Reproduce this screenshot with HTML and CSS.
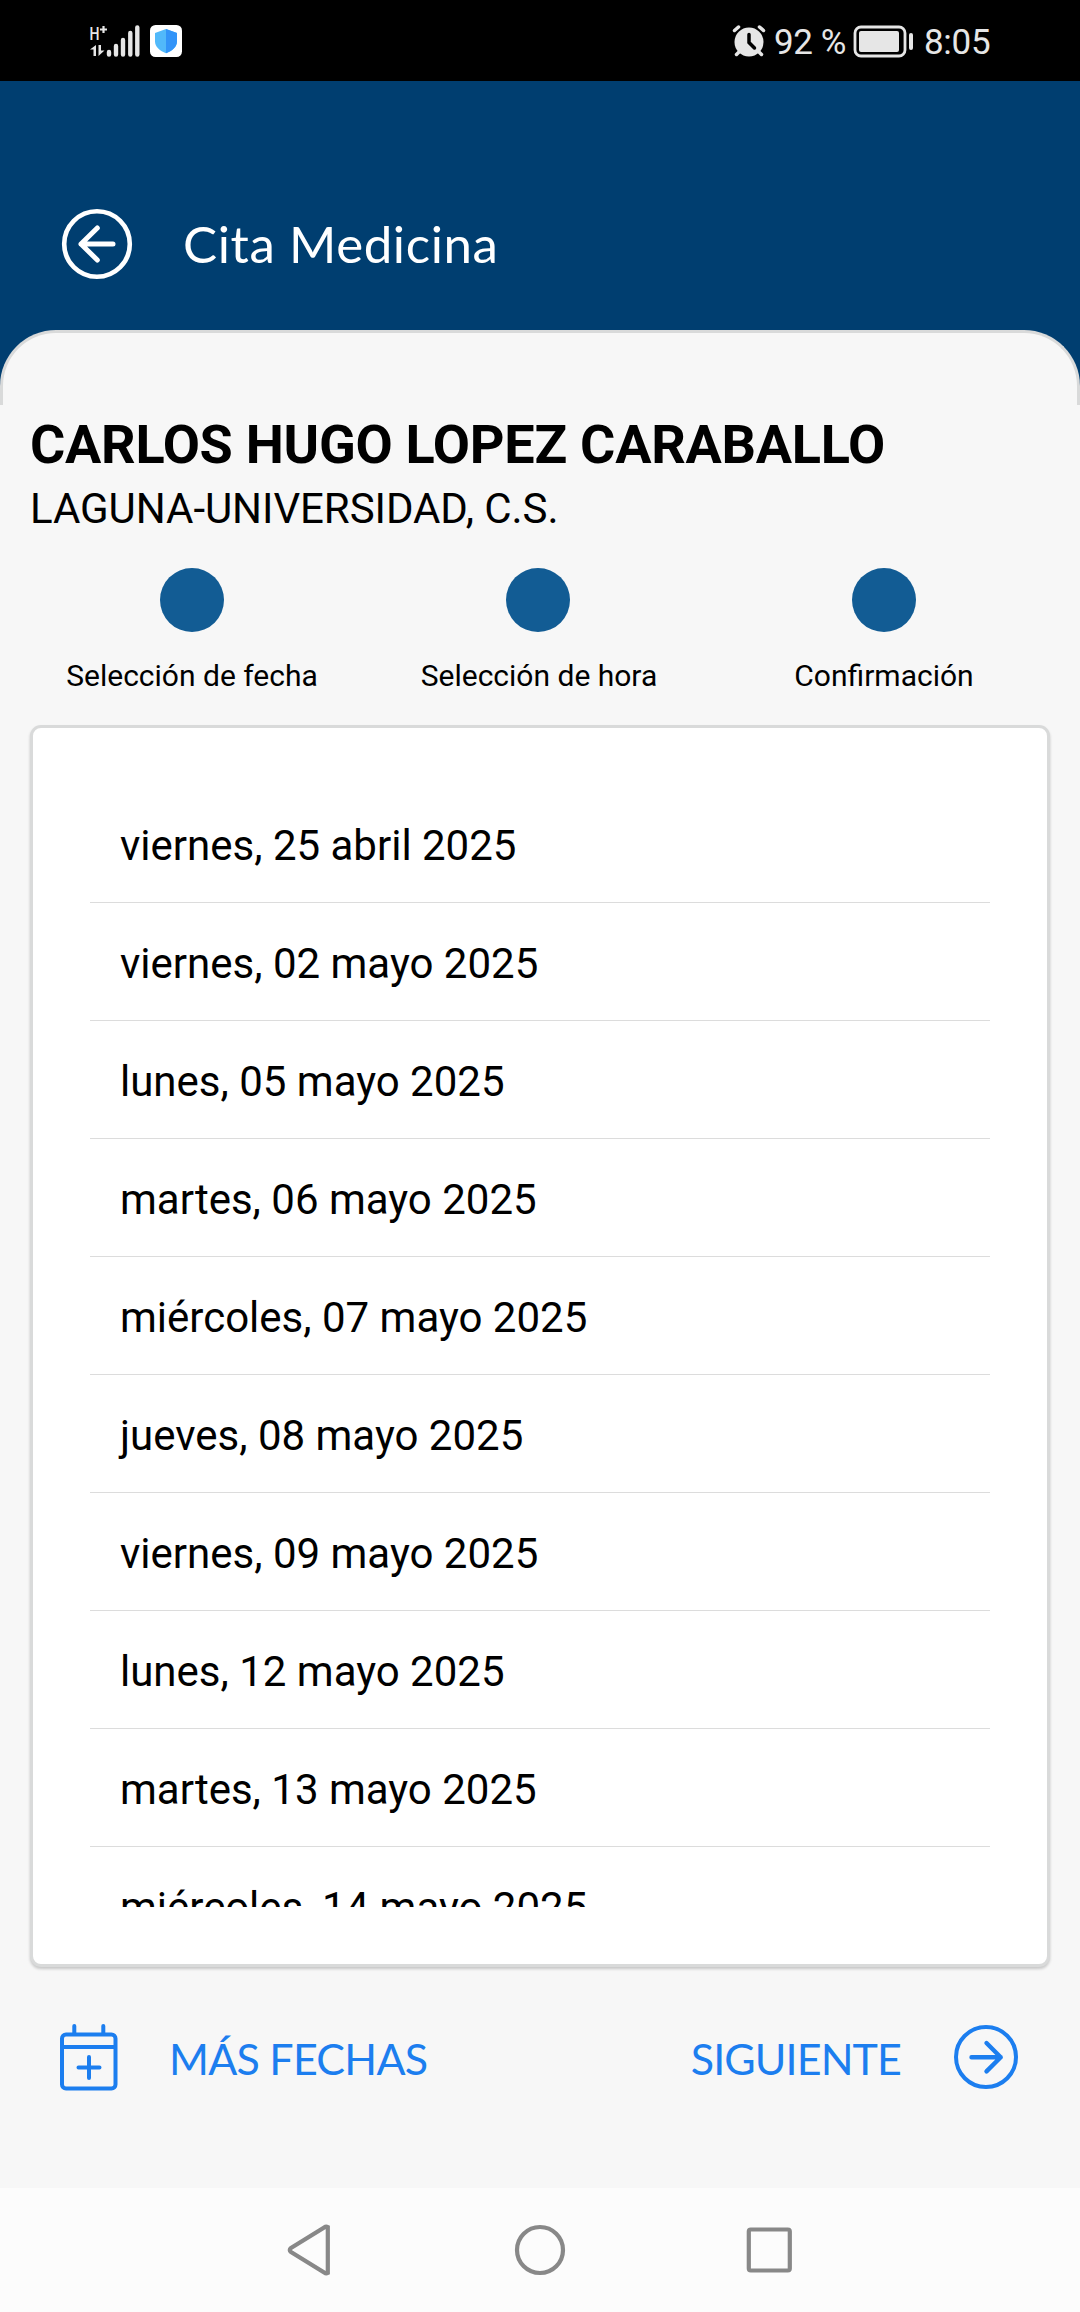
FILE: index.html
```html
<!DOCTYPE html>
<html lang="es">
<head>
<meta charset="utf-8">
<title>Cita Medicina</title>
<link rel="stylesheet" href="styles.css">
</head>
<body>
<div class="status">
  <svg class="signal" width="54" height="42" viewBox="87 19 54 42">
    <text class="net" x="89.500" y="39" textLength="10" lengthAdjust="spacingAndGlyphs">H</text>
    <path d="M100 28.500h7M103.500 25v7" stroke="#e6e6e6" stroke-width="2.200"/>
    <path d="M90 48.500L96 44V55H93.500V48.500ZM98.500 44H101V49.500H104.500L98.500 55Z" fill="#e6e6e6"/>
    <path d="M109 51v2.500M116 45v8.500M123 39v14.500M130.300 32v21.500M137.300 26.500v27" stroke="#e6e6e6" stroke-width="4.400" stroke-linecap="round"/>
  </svg>
  <svg class="shield" width="32" height="32" viewBox="0 0 32 32">
    <rect width="32" height="32" rx="5.500" fill="#fff"/>
    <path d="M16 4L27 8V16.500C27 22 22 26 16 28.300C10 26 5 22 5 16.500V8Z" fill="#51b9fa"/>
    <path d="M16 4L27 8V16.500C27 22 22 26 16 28.300Z" fill="#3294f8"/>
  </svg>
  <span class="push"></span>
  <svg width="34" height="34" viewBox="732 23 34 34">
    <circle cx="749" cy="41" r="14.500" fill="#e6e6e6"/>
    <path d="M734.500 29.500l4-3.500M763.500 29.500l-4-3.500M740 50l-3.500 3.500M758 50l3.500 3.500" stroke="#e6e6e6" stroke-width="3.500" stroke-linecap="round"/>
    <path d="M749 33.500V41.500L754.500 47" fill="none" stroke="#000" stroke-width="3.500" stroke-linecap="round"/>
  </svg>
  <span class="st battery-text">92 %</span>
  <svg width="62" height="34" viewBox="852 23 62 34">
    <rect x="855" y="26" width="50" height="29" rx="6" fill="none" stroke="#e6e6e6" stroke-width="2.800"/>
    <rect x="859" y="30" width="40" height="21" rx="2" fill="#e6e6e6"/>
    <rect x="909" y="32" width="4" height="17" rx="2" fill="#e6e6e6"/>
  </svg>
  <span class="st clock">8:05</span>
</div>
<header class="header">
  <svg width="72" height="72" viewBox="61 208 72 72" fill="none" stroke="#fff">
    <circle cx="97" cy="244" r="32.800" stroke-width="4.600"/>
    <path d="M97.300 228L81 244L97.300 260M81 244H113" stroke-width="5" stroke-linecap="round" stroke-linejoin="round"/>
  </svg>
  <h1 class="title">Cita Medicina</h1>
</header>
<div class="sheet-top"><div class="sheet-edge"></div></div>
<main class="main">
  <h2 class="patient">CARLOS HUGO LOPEZ CARABALLO</h2>
  <p class="center">LAGUNA-UNIVERSIDAD, C.S.</p>
  <div class="steps">
    <div class="step"><i class="dot"></i><span>Selección de fecha</span></div>
    <div class="step"><i class="dot"></i><span class="mid">Selección de hora</span></div>
    <div class="step"><i class="dot"></i><span>Confirmación</span></div>
  </div>
  <section class="card">
    <ul class="dates">
      <li>viernes, 25 abril 2025</li>
      <li>viernes, 02 mayo 2025</li>
      <li>lunes, 05 mayo 2025</li>
      <li>martes, 06 mayo 2025</li>
      <li>miércoles, 07 mayo 2025</li>
      <li>jueves, 08 mayo 2025</li>
      <li>viernes, 09 mayo 2025</li>
      <li>lunes, 12 mayo 2025</li>
      <li>martes, 13 mayo 2025</li>
      <li>miércoles, 14 mayo 2025</li>
    </ul>
  </section>
  <div class="actions">
    <a class="action"><svg width="58" height="68" viewBox="60 2023 58 68" fill="none" stroke="#1c7eef" stroke-width="4">
      <rect x="62" y="2034.500" width="53.500" height="54" rx="4"/>
      <path d="M62 2047H115.500"/>
      <path d="M74.300 2026V2034M103.300 2026V2034M78.500 2067.500H99.500M89 2057V2078" stroke-linecap="round"/>
    </svg><span class="more">MÁS FECHAS</span></a>
    <a class="action"><span class="next">SIGUIENTE</span><svg width="64" height="64" viewBox="954 2025 64 64" fill="none" stroke="#1c7eef">
      <circle cx="986" cy="2057" r="30" stroke-width="4"/>
      <path d="M986.500 2043L1000.700 2057.200L986.500 2071.400M1000.700 2057.200H971.500" stroke-width="4.400" stroke-linecap="round" stroke-linejoin="round"/>
    </svg></a>
  </div>
</main>
<nav class="nav">
  <svg width="44" height="52" viewBox="287 2224 44 52"><path d="M327.800 2227V2273Q326 2274 324.500 2272.600L291 2252Q288.500 2250 291 2248L324.500 2227.400Q326 2226 327.800 2227Z"/></svg>
  <svg class="home" width="52" height="52" viewBox="514 2224 52 52"><circle cx="540" cy="2250" r="23"/></svg>
  <svg width="48" height="48" viewBox="745 2226 48 48"><rect x="748.800" y="2229.500" width="41" height="41" rx="2"/></svg>
</nav>
</body>
</html>
```
FILE: styles.css
```css
* { box-sizing: border-box; }
body {
  margin: 0;
  width: 1080px;
  height: 2312px;
  display: flex;
  flex-direction: column;
  background: #f7f7f7;
  color: #000;
  font-family: Roboto, sans-serif;
  overflow: hidden;
}
h1, h2, p, ul { margin: 0; padding: 0; font-weight: 400; }
svg { display: block; flex: none; }
.status {
  height: 81px;
  padding: 0 89px 0 87px;
  display: flex;
  align-items: center;
  background: #000;
}
.signal { margin-right: 9px; }
.net { font: 500 19px Roboto, sans-serif; fill: #e6e6e6; }
.push { flex: 1; }
.st {
  color: #e6e6e6;
  font: 400 35px/40px Roboto, sans-serif;
  white-space: nowrap;
  padding-top: 4px;
}
.battery-text { width: 78px; margin-left: 8px; letter-spacing: -0.4px; }
.clock { width: 67px; margin-left: 10px; letter-spacing: -0.3px; }
.header {
  height: 249px;
  padding: 78px 0 1px 61px;
  display: flex;
  align-items: center;
  background: #003e70;
}
.header svg { margin-bottom: 1px; }
.title {
  margin-left: 50px;
  color: #fff;
  font: 400 51px/60px Lato, sans-serif;
  letter-spacing: 0.6px;
  white-space: nowrap;
}
.sheet-top { height: 75px; background: #003e70; }
.sheet-edge {
  height: 75px;
  border: 3px solid #d9dada;
  border-bottom: 0;
  border-radius: 56px 56px 0 0;
  background: #f7f7f7;
}
.main { padding: 9px 30px 0; height: 1783px; }
.patient { font-size: 54px; line-height: 62px; font-weight: 700; letter-spacing: -0.27px; white-space: nowrap; }
.center { font-size: 42px; line-height: 50px; margin-top: 8px; letter-spacing: -0.06px; white-space: nowrap; }
.steps {
  display: grid;
  grid-template-columns: repeat(3, 346px);
  margin: 34px -11px 0;
}
.step { display: flex; flex-direction: column; align-items: center; font-size: 30px; line-height: 36px; }
.mid { padding-left: 2px; }
.dot { width: 64px; height: 64px; border-radius: 50%; background: #125c94; margin-bottom: 26px; }
.card {
  height: 1242px;
  margin-top: 31px;
  padding: 57px 57px 0;
  border: 3px solid #d9dada;
  border-radius: 11px;
  background: #fff;
  box-shadow: 0 2px 3px rgba(0, 0, 0, 0.2);
}
.dates { height: 1122px; overflow: hidden; list-style: none; }
.dates li {
  height: 118px;
  padding: 36px 30px 0;
  border-bottom: 1px solid #dcdcdc;
  font-size: 42px;
  line-height: 50px;
}
.actions {
  display: flex;
  justify-content: space-between;
  align-items: center;
  margin: 56px 32px 0 30px;
  height: 68px;
}
.action { display: flex; align-items: center; color: #1c7eef; font: 400 43px/50px Lato, sans-serif; white-space: nowrap; }
.more { margin-left: 51px; padding-top: 3px; letter-spacing: -0.75px; }
.next { margin-right: 53px; padding-top: 3px; letter-spacing: -0.9px; }
.nav {
  height: 124px;
  padding: 0 287px;
  display: flex;
  justify-content: space-between;
  align-items: center;
  background: #fcfcfc;
}
.nav svg { fill: none; stroke: #888; stroke-width: 4.2; }
.nav .home { margin-left: 4px; }
```
